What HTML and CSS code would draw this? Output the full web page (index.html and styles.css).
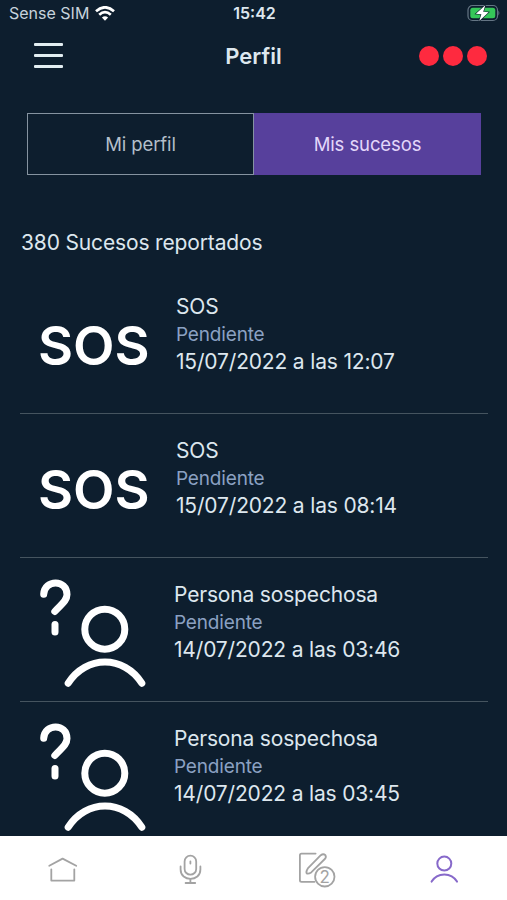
FILE: index.html
```html
<!DOCTYPE html>
<html lang="es">
<head>
  <meta charset="UTF-8">
  <title>Perfil</title>
  <meta name="viewport" content="width=device-width, initial-scale=1.0">
  <link rel="stylesheet" href="styles.css">
</head>
<body>
  <!-- Barra de estado -->
  <div class="status-bar">
    <div class="carrier">
      <span>Sense SIM</span>
      <svg width="20" height="15" viewBox="0 0 20 15" fill="none" stroke="#fff" stroke-width="2.7">
        <path d="M1 5.2 Q10 -2.6 19 5.2"/>
        <path d="M4.2 8.7 Q10 3.6 15.8 8.7"/>
        <path d="M10 14.8 L6.9 11.6 Q10 9 13.1 11.6 Z" fill="#fff" stroke="none"/>
      </svg>
    </div>
    <div class="clock">15:42</div>
    <svg class="battery" width="34" height="18" viewBox="0 0 34 18">
      <rect x="2" y="1.5" width="29.5" height="15" rx="4.5" fill="none" stroke="#647584" stroke-width="1.2"/>
      <rect x="4.3" y="3.8" width="25" height="10.4" rx="2.5" fill="#35c759"/>
      <path d="M32.4 6.5 Q34.4 9 32.4 11.5 Z" fill="#647584"/>
      <path d="M19.3 1.2 L9.9 9.7 L15.4 10.2 L13.2 17 L22.6 8.3 L17.2 7.8 Z" fill="#fff" stroke="#0e2030" stroke-width="1.2" paint-order="stroke"/>
    </svg>
  </div>

  <!-- Cabecera -->
  <header class="header">
    <div class="menu"><span></span><span></span><span></span></div>
    <h1>Perfil</h1>
    <div class="dots"><span></span><span></span><span></span></div>
  </header>

  <main>
    <div class="tabs">
      <div class="tab">Mi perfil</div>
      <div class="tab active">Mis sucesos</div>
    </div>

    <h2>380 Sucesos reportados</h2>

    <div class="list">
      <div class="item">
        <div class="sos">SOS</div>
        <div class="info">
          <p>SOS</p>
          <p class="state">Pendiente</p>
          <p class="date">15/07/2022 a las 12:07</p>
        </div>
      </div>
      <div class="item">
        <div class="sos">SOS</div>
        <div class="info">
          <p>SOS</p>
          <p class="state">Pendiente</p>
          <p class="date">15/07/2022 a las 08:14</p>
        </div>
      </div>
      <div class="item">
        <svg class="person" viewBox="0 0 106 108">
          <path d="M3.7 15.2 C4.5 0.2 27 0.2 27 15.5 C27 22 21 25.5 14.8 32.5"/>
          <path d="M15 45.5 V53"/>
          <circle cx="64.8" cy="50.2" r="20"/>
          <path d="M28.2 104.2 C46 76 84 76 101.8 104.2"/>
        </svg>
        <div class="info">
          <p>Persona sospechosa</p>
          <p class="state">Pendiente</p>
          <p class="date">14/07/2022 a las 03:46</p>
        </div>
      </div>
      <div class="item">
        <svg class="person" viewBox="0 0 106 108">
          <path d="M3.7 15.2 C4.5 0.2 27 0.2 27 15.5 C27 22 21 25.5 14.8 32.5"/>
          <path d="M15 45.5 V53"/>
          <circle cx="64.8" cy="50.2" r="20"/>
          <path d="M28.2 104.2 C46 76 84 76 101.8 104.2"/>
        </svg>
        <div class="info">
          <p>Persona sospechosa</p>
          <p class="state">Pendiente</p>
          <p class="date">14/07/2022 a las 03:45</p>
        </div>
      </div>
    </div>
  </main>

  <!-- Menú inferior -->
  <nav class="bottom-nav">
    <a>
      <svg width="40" height="40" viewBox="0 0 40 40">
        <path d="M6.3 15.8 L19.6 8.6 L33.2 15.8"/>
        <path d="M8.3 19.3 V30.6 H31.3 V19.3"/>
      </svg>
    </a>
    <a>
      <svg width="40" height="40" viewBox="0 0 40 40">
        <rect x="14.6" y="5.7" width="11.6" height="19" rx="5.8"/>
        <path d="M10.6 16.5 V19.5 C10.6 32 30.4 32 30.4 19.5 V16.5"/>
        <path d="M20.4 29 V32.7 M15.6 33 H25.2 M20.4 11.5 V13.5"/>
      </svg>
    </a>
    <a>
      <svg width="40" height="40" viewBox="0 0 40 40">
        <path d="M18.6 3.6 H4.5 Q2.9 3.6 2.9 5.2 V30.2 Q2.9 31.8 4.5 31.8 H17.5"/>
        <path d="M23.8 5.2 Q26.3 3.2 28.4 5.2 Q29.6 7.2 27.8 9 L14.2 22.4 Q11 24.4 9.6 23.2 Q8.8 21.4 10.8 18.4 Z"/>
        <circle cx="27.8" cy="26.8" r="9.7"/>
        <text x="27.8" y="32.8" text-anchor="middle">2</text>
      </svg>
    </a>
    <a class="current">
      <svg width="40" height="40" viewBox="0 0 40 40">
        <circle cx="20.3" cy="13.6" r="7"/>
        <path d="M7.6 31.6 C13.2 22 27.4 22 33 31.6"/>
      </svg>
    </a>
  </nav>
</body>
</html>
```
FILE: styles.css
```css
* {
  box-sizing: border-box;
  margin: 0;
  padding: 0;
}

body {
  display: flex;
  flex-direction: column;
  height: 900px;
  overflow: hidden;
  font-family: Inter, "Liberation Sans", sans-serif;
  background: #0d1e2e;
  color: #dde7ee;
}

/* Barra de estado */
.status-bar {
  display: grid;
  grid-template-columns: 1fr auto 1fr;
  align-items: center;
  height: 26px;
  padding: 0 7px 0 9px;
  font-size: 16px;
}

.carrier {
  display: flex;
  align-items: center;
  gap: 6px;
  color: #c6d2dc;
}

.clock {
  font-weight: 600;
}

.battery {
  justify-self: end;
}

/* Cabecera */
.header {
  display: grid;
  grid-template-columns: 1fr auto 1fr;
  align-items: center;
  height: 60px;
  padding: 0 20px;
}

.menu {
  display: flex;
  flex-direction: column;
  gap: 8.5px;
  width: 29px;
  margin: -1px 0 0 14px;
}

.menu span {
  height: 2.5px;
  border-radius: 1px;
  background: #e2eef2;
}

h1 {
  font-size: 22px;
  font-weight: 600;
}

.dots {
  display: flex;
  justify-self: end;
  gap: 3.5px;
}

.dots span {
  width: 20.5px;
  height: 20.5px;
  border-radius: 50%;
  background: #fe2a3f;
}

main {
  flex: 1;
  min-height: 0;
  overflow: hidden;
}

/* Pestañas */
.tabs {
  display: flex;
  height: 62px;
  margin: 27px 26px 0 27px;
}

.tab {
  flex: 1;
  display: flex;
  align-items: center;
  justify-content: center;
  border: 1px solid #8593a0;
  font-size: 18.5px;
  letter-spacing: -0.1px;
  color: #b4bfca;
}

.tab.active {
  border-color: #57409c;
  background: #57409c;
  color: #e3d6fa;
}

h2 {
  margin: 53px 21px 13px;
  font-size: 21px;
  font-weight: 400;
  line-height: 29px;
  letter-spacing: -0.15px;
}

/* Lista de sucesos */
.list {
  margin: 0 19px 0 20px;
}

.item {
  display: flex;
  gap: 28px;
  height: 144px;
  padding: 23px 0 0 20px;
  border-bottom: 1px solid #45545f;
}

.sos {
  width: 108px;
  margin-top: 21px;
  font-size: 54px;
  font-weight: 600;
  line-height: 64px;
  text-indent: -2px;
  color: #fff;
}

.person {
  width: 106px;
  height: 108px;
  margin-top: -2px;
  fill: none;
  stroke: #fff;
  stroke-width: 7;
  stroke-linecap: round;
}

.info {
  font-size: 21px;
  line-height: 28px;
  letter-spacing: -0.17px;
  white-space: nowrap;
}

.info .state {
  font-size: 19px;
  color: #8ba1c2;
}

.info .date {
  line-height: 26px;
}

/* Menú inferior */
.bottom-nav {
  display: flex;
  height: 64px;
  background: #fff;
}

.bottom-nav a {
  flex: 1;
  display: flex;
  justify-content: center;
  padding-top: 14px;
}

.bottom-nav svg {
  fill: none;
  stroke: #a3a3a3;
  stroke-width: 1.8;
  stroke-linecap: round;
  stroke-linejoin: round;
}

.bottom-nav text {
  font-size: 17px;
  fill: #a3a3a3;
  stroke: none;
}

.bottom-nav .current svg {
  stroke: #8769ca;
  stroke-width: 2;
}
```
